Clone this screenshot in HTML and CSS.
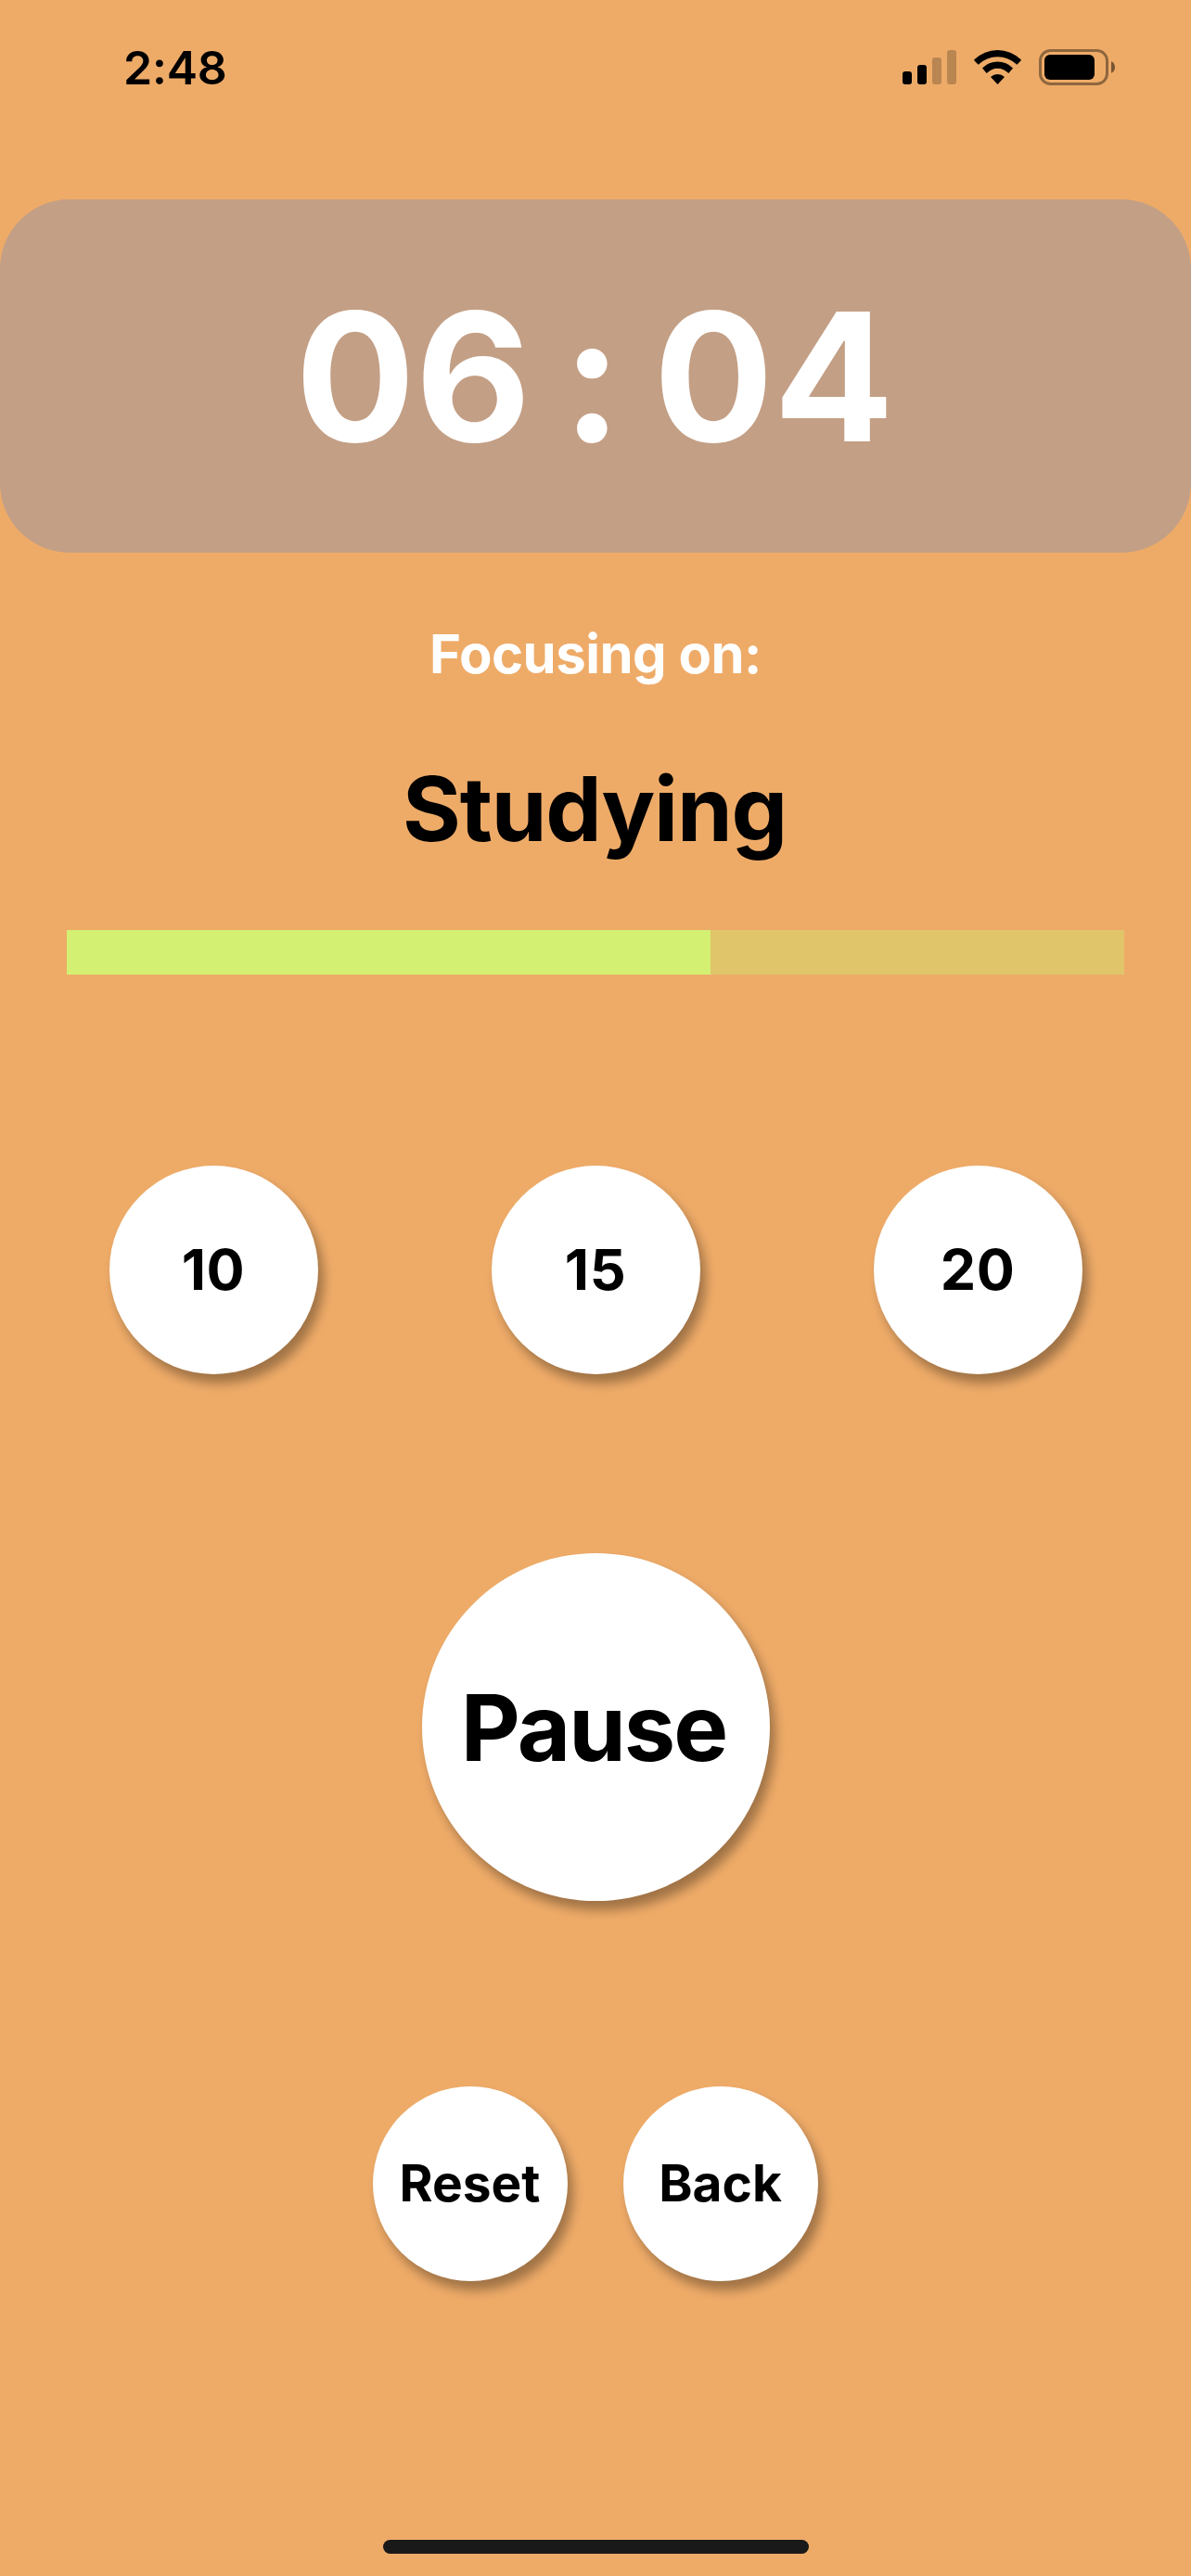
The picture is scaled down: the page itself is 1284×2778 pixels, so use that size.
FILE: index.html
```html
<!DOCTYPE html>
<html lang="en">
<head>
<meta charset="utf-8">
<title>Focus timer</title>
<link rel="stylesheet" href="styles.css">
</head>
<body>
<header class="status">
  <span class="clock">2:48</span>
  <svg class="icons" width="232" height="42" viewBox="0 0 232 42">
    <rect x="1" y="26" width="10" height="14" rx="3"/>
    <rect x="17" y="19" width="10" height="21" rx="3"/>
    <g opacity=".22"><rect x="33" y="11" width="10" height="29" rx="3"/><rect x="49" y="3" width="10" height="37" rx="3"/></g>
    <path d="M78.300 13.300A36 36 0 0 1 128.700 13.300Q129 14 128.500 14.500L124.300 18.700A30 30 0 0 0 82.700 18.700L78.500 14.500Q78 14 78.300 13.300Z"/>
    <path d="M87 22.500A23 23 0 0 1 120 22.500L115.300 28A16 16 0 0 0 91.700 28Z"/>
    <path d="M96 32A11 11 0 0 1 111 32L103.500 40Z"/>
    <rect x="149.500" y="3.500" width="72" height="36" rx="11" fill="none" stroke="#000" stroke-opacity=".4" stroke-width="3"/>
    <rect x="154" y="8" width="54" height="27" rx="6"/>
    <path d="M226 15.300q4 1.700 4 6.200t-4 6.200z" opacity=".5"/>
  </svg>
</header>
<main>
  <section class="timer"><span>06</span><span class="colon">:</span><span>04</span></section>
  <p class="label">Focusing on:</p>
  <h1 class="task">Studying</h1>
  <div class="progress"><div class="fill"></div></div>
  <div class="presets"><button class="preset">10</button><button class="preset">15</button><button class="preset">20</button></div>
  <button class="pause">Pause</button>
  <div class="actions"><button class="action">Reset</button><button class="action">Back</button></div>
</main>
<div class="home"></div>
</body>
</html>
```
FILE: styles.css
```css
* { box-sizing: border-box; }
body { margin: 0; height: 2778px; background: #eeab68; font-family: Inter, sans-serif; color: #000; display: flex; flex-direction: column; overflow: hidden; }
.status { height: 215px; padding: 51px 80px 0 133px; display: flex; justify-content: space-between; align-items: flex-start; }
.clock { font-size: 50px; font-weight: 600; line-height: 44px; letter-spacing: -.2px; }
main { display: flex; flex-direction: column; align-items: center; }
.timer { width: 1284px; height: 381px; padding: 1px 2px 0 0; border-radius: 75px; background: #c39f85; color: #fff; font-size: 192px; font-weight: 700; display: flex; justify-content: center; align-items: center; gap: 34px; }
.label { margin: 73px 0 0; height: 72px; line-height: 72px; color: #fff; font-size: 58px; font-weight: 700; letter-spacing: -.5px; }
.task { margin: 72px 0 0; padding-right: 2px; height: 118px; line-height: 118px; font-size: 96px; font-weight: 700; letter-spacing: -1.2px; }
.progress { margin-top: 72px; width: 1140px; height: 48px; background: #e0c56b; }
.fill { width: 694px; height: 48px; background: #d3f072; }
.presets { margin-top: 206px; display: flex; gap: 187px; }
button { border: 0; padding: 0; border-radius: 50%; background: #fff; color: #000; font-family: inherit; box-shadow: 6px 10px 12px rgba(0,0,0,.33); }
.preset { width: 225px; height: 225px; padding-bottom: 2px; font-size: 61px; font-weight: 700; letter-spacing: .5px; }
.pause { margin-top: 193px; width: 375px; height: 375px; padding-right: 4px; font-size: 99px; font-weight: 700; letter-spacing: -2px; }
.actions { margin-top: 200px; display: flex; gap: 60px; }
.action { width: 210px; height: 210px; padding: 0 1px 2px 0; font-size: 55px; font-weight: 700; }
.home { width: 459px; height: 15px; margin: auto auto 24px; border-radius: 8px; background: #191919; }
```
